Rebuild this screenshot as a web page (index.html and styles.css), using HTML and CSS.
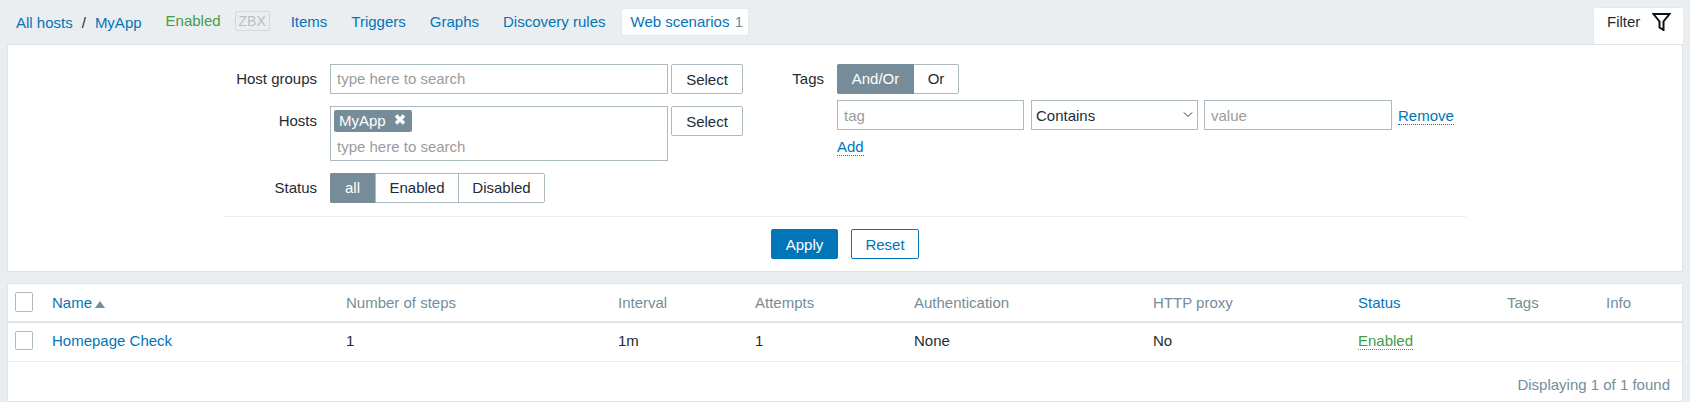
FILE: index.html
```html
<!DOCTYPE html>
<html lang="en">
<head>
<meta charset="utf-8">
<title>Web scenarios</title>
<link rel="stylesheet" href="styles.css">
</head>
<body>
<header class="topbar">
  <nav class="crumbs"><a class="link">All hosts</a><span class="sep">/</span><a class="link">MyApp</a></nav>
  <span class="state">Enabled</span>
  <span class="zbx">ZBX</span>
  <nav class="tabs">
    <a class="tab">Items</a>
    <a class="tab">Triggers</a>
    <a class="tab">Graphs</a>
    <a class="tab">Discovery rules</a>
    <a class="tab tab-on">Web scenarios <span class="count">1</span></a>
  </nav>
  <div class="filter-tab">
    <span>Filter</span>
    <svg class="funnel" width="19" height="18" viewBox="0 0 19 18"><path d="M1.5 1H17.5L11.5 8.5V17L7.5 14.5V8.5Z" fill="none" stroke="#111" stroke-width="2"/></svg>
  </div>
</header>

<section class="panel filter">
  <div class="filter-cols">
    <div class="form-left">
      <label class="lbl">Host groups</label>
      <div class="input ph">type here to search</div>
      <button class="btn">Select</button>

      <label class="lbl">Hosts</label>
      <div class="multi">
        <span class="chip"><span class="chip-text">MyApp</span><svg class="chip-x" width="12" height="11" viewBox="0 0 12 11"><path d="M2 1.5L10 9.5M10 1.5L2 9.5" stroke="#fff" stroke-width="3.4"/></svg></span>
        <span class="multi-ph">type here to search</span>
      </div>
      <button class="btn btn-top">Select</button>

      <label class="lbl">Status</label>
      <div class="seg seg-span">
        <span class="seg-item seg-on w-all">all</span>
        <span class="seg-item w-en">Enabled</span>
        <span class="seg-item w-dis">Disabled</span>
      </div>
    </div>

    <div class="form-right">
      <label class="lbl">Tags</label>
      <div class="tags-col">
        <div class="seg">
          <span class="seg-item seg-on w-and">And/Or</span>
          <span class="seg-item w-or">Or</span>
        </div>
        <div class="tag-row">
          <div class="input ph w-tag">tag</div>
          <div class="input sel">Contains<svg class="chev" width="10" height="6" viewBox="0 0 10 6"><path d="M1 .5L5 4.5L9 .5" fill="none" stroke="#1f2c33" stroke-width="1"/></svg></div>
          <div class="input ph w-val">value</div>
          <a class="dotted link">Remove</a>
        </div>
        <a class="dotted link add">Add</a>
      </div>
    </div>
  </div>
  <div class="divider"></div>
  <div class="actions">
    <button class="btn-primary">Apply</button>
    <button class="btn-alt">Reset</button>
  </div>
</section>

<section class="panel list">
  <table class="grid">
    <colgroup>
      <col class="c0"><col class="c1"><col class="c2"><col class="c3"><col class="c4"><col class="c5"><col class="c6"><col class="c7"><col class="c8"><col class="c9">
    </colgroup>
    <thead>
      <tr>
        <th class="cb-cell"><span class="check"></span></th>
        <th><a class="link">Name</a><span class="sort"></span></th>
        <th>Number of steps</th>
        <th>Interval</th>
        <th>Attempts</th>
        <th>Authentication</th>
        <th>HTTP proxy</th>
        <th><a class="link">Status</a></th>
        <th>Tags</th>
        <th>Info</th>
      </tr>
    </thead>
    <tbody>
      <tr>
        <td class="cb-cell"><span class="check check-row"></span></td>
        <td><a class="link">Homepage Check</a></td>
        <td>1</td>
        <td>1m</td>
        <td>1</td>
        <td>None</td>
        <td>No</td>
        <td><a class="enabled">Enabled</a></td>
        <td></td>
        <td></td>
      </tr>
    </tbody>
  </table>
  <div class="foot">Displaying 1 of 1 found</div>
</section>
</body>
</html>
```
FILE: styles.css
```css
* { box-sizing: border-box; }
html, body { margin: 0; height: 402px; overflow: hidden; }
body {
  background: #ebeef0;
  font-family: "Liberation Sans", Arial, sans-serif;
  font-size: 15px;
  line-height: 17px;
  color: #1f2c33;
  width: 1690px;
}
.link { color: #0275b8; }

.topbar { display: flex; align-items: center; height: 44px; padding-left: 16px; padding-right: 7px; }
.crumbs { display: flex; }
.sep { margin: 0 9px; }
.state { color: #429e47; margin-left: 24px; margin-top: -4px; }
.zbx {
  display: flex; align-items: center; justify-content: center;
  width: 35px; height: 20px; margin-left: 14px; margin-top: -2px;
  border: 1px solid #d3d8dc; border-radius: 2px;
  color: #b6bfc5; font-size: 14px;
}
.tabs { display: flex; align-items: center; gap: 6px; margin-left: 12px; margin-top: -1px; }
.tab { color: #0275b8; padding: 0 9px; height: 26px; line-height: 26px; }
.tab-on { background: #fff; border-radius: 2px; box-shadow: 0 0 0 1px #e4e8eb; padding: 0 5px 0 9px; margin-left: 1px; }
.count { color: #768d99; margin-left: 1px; }
.filter-tab {
  margin-left: auto; align-self: flex-end; height: 36px; width: 89px;
  background: #fff; border-radius: 2px 2px 0 0;
  box-shadow: 0 -1px 0 #e4e8eb, -1px 0 0 #e4e8eb;
  display: flex; align-items: flex-start; padding: 5px 0 0 13px; position: relative; z-index: 1;
}
.funnel { margin: 0 12px 0 auto; }

.panel { background: #fff; border: 1px solid #dfe4e7; margin: 0 7px; }
.filter { height: 228px; padding: 19px 0 0; }
.list { margin-top: 11px; height: 119px; }

.filter-cols { display: flex; height: 139px; padding-left: 209px; }
.form-left { display: grid; grid-template-columns: 113px 341px 72px; row-gap: 12px; grid-template-rows: 30px 55px 30px; align-content: start; width: 526px; }
.form-right { display: flex; margin-left: 34px; align-items: flex-start; }
.lbl { text-align: right; line-height: 30px; }
.form-left .lbl { margin-right: 13px; }
.form-right .lbl { width: 47px; margin-right: 13px; }

.input {
  height: 30px; border: 1px solid #acbbc2; background: #fff;
  line-height: 28px; padding: 0 6px;
}
.ph { color: #9c9c9c; }
.form-left > .input, .multi { width: 338px; }
.multi { height: 55px; border: 1px solid #acbbc2; padding: 3px; display: flex; flex-direction: column; align-items: flex-start; }
.chip {
  display: inline-flex; align-items: center; height: 22px; width: 78px;
  background: #768d99; color: #fff; border-radius: 2px; padding-left: 5px;
}
.chip-text { margin-top: -1px; }
.chip-x { margin: -3px 0 0 8px; }
.multi-ph { color: #9c9c9c; padding: 6px 0 0 3px; }

.btn {
  height: 30px; width: 72px; padding: 0;
  background: #fff; color: #1f2c33; border: 1px solid #acbbc2; border-radius: 2px;
  font: inherit;
}
.btn-top { align-self: start; }

.seg { display: flex; height: 30px; border: 1px solid #acbbc2; border-radius: 2px; width: max-content; }
.seg-span { grid-column: 2 / 4; }
.seg-item { display: block; line-height: 28px; text-align: center; border-left: 1px solid #acbbc2; }
.seg-item:first-child { border-left: 0; }
.seg-on { background: #768d99; color: #fff; margin: -1px 0 -1px -1px; line-height: 30px; border-radius: 2px 0 0 2px; }
.w-all { width: 45px; }
.w-en { width: 83px; }
.w-dis { width: 86px; }
.w-and { width: 77px; }
.w-or { width: 44px; border-left: 0; }

.tags-col { display: flex; flex-direction: column; align-items: flex-start; }
.tag-row { display: flex; align-items: center; margin-top: 6px; }
.tag-row .input { line-height: 30px; }
.w-tag { width: 187px; }
.sel { width: 167px; margin-left: 7px; padding: 1px 4px 0 4px; color: #1f2c33; display: flex; align-items: center; justify-content: space-between; }
.chev { flex: none; margin-top: -2px; }
.w-val { width: 188px; margin-left: 6px; }
.dotted { border-bottom: 1px dotted #0275b8; line-height: 17px; }
.tag-row .dotted { margin: 2px 0 0 6px; }
.add { margin-top: 8px; }

.divider { height: 1px; background: #ebeef0; margin: 13px 216px 0 216px; }
.actions { display: flex; justify-content: center; gap: 13px; margin-top: 12px; }
.btn-primary, .btn-alt { height: 30px; border-radius: 2px; font: inherit; padding: 0; }
.btn-primary { width: 67px; background: #0275b8; border: 1px solid #0275b8; color: #fff; }
.btn-alt { width: 68px; background: #fff; border: 1px solid #0275b8; color: #0275b8; }

.grid { width: 100%; table-layout: fixed; border-collapse: collapse; }
.c0 { width: 37px; }
.c1 { width: 294px; }
.c2 { width: 272px; }
.c3 { width: 137px; }
.c4 { width: 159px; }
.c5 { width: 239px; }
.c6 { width: 205px; }
.c7 { width: 149px; }
.c8 { width: 99px; }
th, td { text-align: left; padding: 0 7px; font-weight: normal; vertical-align: middle; }
th { height: 38px; color: #768d99; border-bottom: 2px solid #dfe4e7; }
td { height: 39px; padding-bottom: 2px; border-bottom: 1px solid #ebeef0; }
.check { display: block; width: 18px; height: 20px; margin-top: -2px; border: 1px solid #acbbc2; border-radius: 2px; background: #fff; }
.check-row { height: 19px; margin-top: -1px; }
th.cb-cell, td.cb-cell { padding: 0 0 0 7px; }
td.cb-cell { padding-bottom: 2px; }
.sort { display: inline-block; width: 0; height: 0; margin-left: 3px; border: 5px solid transparent; border-top: 0; border-bottom: 7px solid #768d99; }
.enabled { color: #429e47; border-bottom: 1px dotted #429e47; }
.foot { text-align: right; color: #768d99; padding: 14px 12px 0 0; }
```
